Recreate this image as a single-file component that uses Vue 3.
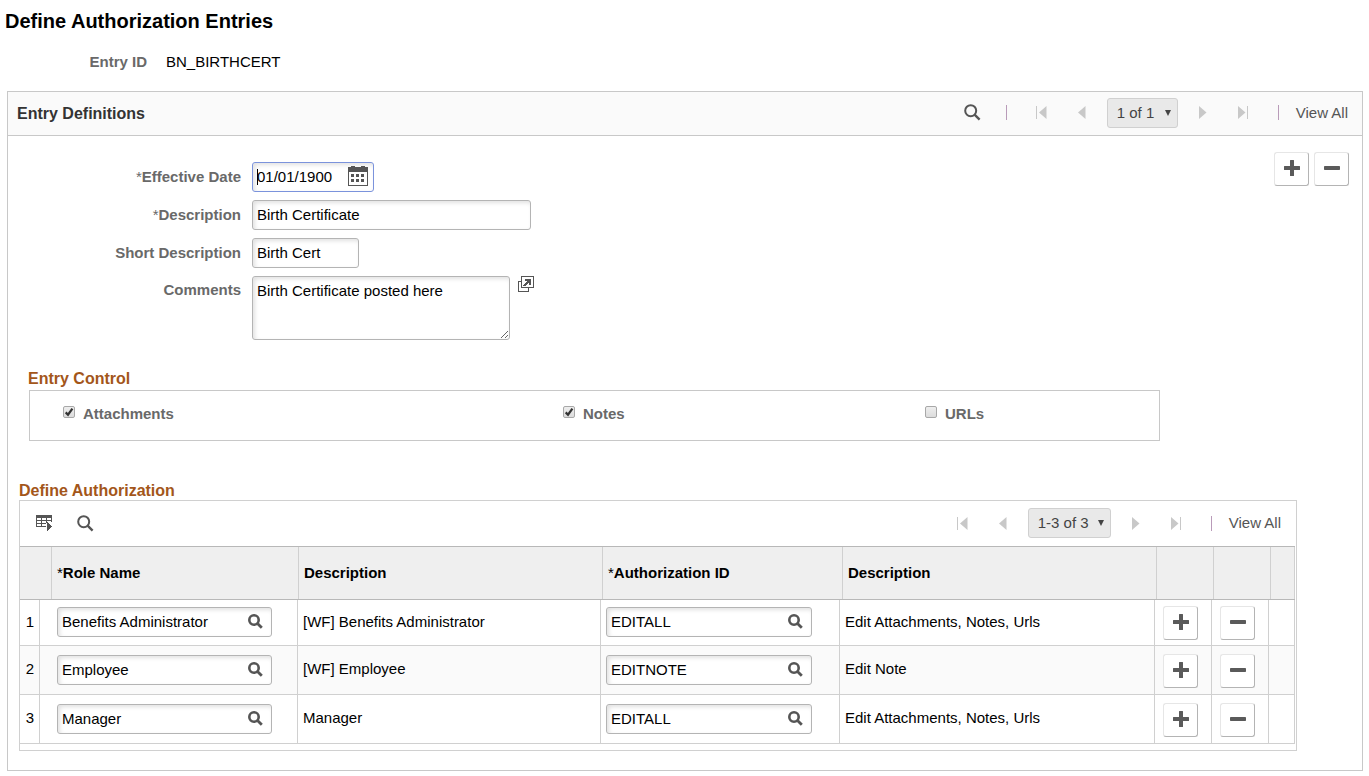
<script setup>
import { reactive, ref } from 'vue'

const entry = reactive({
  effectiveDate: '01/01/1900',
  description: 'Birth Certificate',
  shortDescription: 'Birth Cert',
  comments: 'Birth Certificate posted here',
})

const controls = reactive([
  { id: 'attachments', label: 'Attachments', checked: true },
  { id: 'notes', label: 'Notes', checked: true },
  { id: 'urls', label: 'URLs', checked: false },
])

const rows = reactive([
  { role: 'Benefits Administrator', roleText: '[WF] Benefits Administrator', auth: 'EDITALL', authText: 'Edit Attachments, Notes, Urls' },
  { role: 'Employee', roleText: '[WF] Employee', auth: 'EDITNOTE', authText: 'Edit Note' },
  { role: 'Manager', roleText: 'Manager', auth: 'EDITALL', authText: 'Edit Attachments, Notes, Urls' },
])

const entryPage = ref('1 of 1')
const rowPage = ref('1-3 of 3')
</script>

<template>
  <main class="page">
    <svg class="defs" aria-hidden="true">
      <symbol id="i-search" viewBox="0 0 17 17">
        <circle cx="6.7" cy="6.7" r="5.5" fill="none" stroke="#555" stroke-width="2" />
        <path d="M10.6 10.6 15.6 15.6" stroke="#555" stroke-width="2.4" />
      </symbol>
      <symbol id="i-lookup" viewBox="0 0 15 15">
        <circle cx="6" cy="6" r="4.7" fill="none" stroke="#555" stroke-width="2.6" />
        <path d="M9.2 9.2 13.8 13.8" stroke="#555" stroke-width="2.8" />
      </symbol>
      <symbol id="i-first" viewBox="0 0 11 13">
        <path d="M0 0h1v13H0zM10.500 0v13L3 6.500z" fill="#c8c8c8" />
      </symbol>
      <symbol id="i-prev" viewBox="0 0 8 13">
        <path d="M7.500 0v13L0 6.500z" fill="#c8c8c8" />
      </symbol>
      <symbol id="i-next" viewBox="0 0 8 13">
        <path d="M0 0v13l7.500-6.500z" fill="#c8c8c8" />
      </symbol>
      <symbol id="i-last" viewBox="0 0 11 13">
        <path d="M0 0v13l7.500-6.500zM9 0h1v13H9z" fill="#c8c8c8" />
      </symbol>
      <symbol id="i-plus" viewBox="0 0 16 16">
        <path d="M6.500 0h3q.5 0 .5.500V6h5.500q.5 0 .5.500v3q0 .5-.5.500H10v5.500q0 .5-.5.500h-3q-.5 0-.5-.5V10H.5q-.5 0-.5-.5v-3Q0 6 .5 6H6V.5q0-.5.500-.5z" fill="#5a5a5a" />
      </symbol>
      <symbol id="i-minus" viewBox="0 0 16 16">
        <rect y="6" width="16" height="4" rx=".7" fill="#5a5a5a" />
      </symbol>
    </svg>

    <h1>Define Authorization Entries</h1>
    <div class="entry-id">
      <span class="label">Entry ID</span>
      <span>BN_BIRTHCERT</span>
    </div>

    <section class="panel">
      <header class="panel-head">
        <h2>Entry Definitions</h2>
        <button class="icon find" aria-label="Find"><svg width="17" height="17"><use href="#i-search" /></svg></button>
        <nav class="pager" aria-label="Entry definitions">
          <span class="sep"></span>
          <button class="icon first" aria-label="First"><svg width="11" height="13"><use href="#i-first" /></svg></button>
          <button class="icon prev" aria-label="Previous"><svg width="8" height="13"><use href="#i-prev" /></svg></button>
          <span class="pick">
            <select v-model="entryPage" aria-label="Entry definition row"><option>1 of 1</option></select>
            <svg width="6" height="6" viewBox="0 0 6 6"><path d="M0 0h6L3 6z" fill="#444" /></svg>
          </span>
          <button class="icon next" aria-label="Next"><svg width="8" height="13"><use href="#i-next" /></svg></button>
          <button class="icon last" aria-label="Last"><svg width="11" height="13"><use href="#i-last" /></svg></button>
          <span class="sep"></span>
          <a href="#" class="all">View All</a>
        </nav>
      </header>

      <div class="top">
        <div class="fields">
          <label class="label" for="effdt"><span class="star">*</span>Effective Date</label>
          <div class="box date">
            <input id="effdt" v-model="entry.effectiveDate" type="text" />
            <span class="caret"></span>
            <button class="icon" aria-label="Choose a date">
              <svg width="20" height="20" viewBox="0 0 20 20" shape-rendering="crispEdges">
                <path d="M0 1h3V0h4v1h6V0h4v1h3v19H0zM1 6v13h18V6z" fill="#555" fill-rule="evenodd" />
                <path d="M3 8h3v3H3zM8 8h3v3H8zM13 8h3v3h-3zM3 13h3v3H3zM8 13h3v3H8zM13 13h3v3h-3z" fill="#555" />
              </svg>
            </button>
          </div>

          <label class="label" for="descr"><span class="star">*</span>Description</label>
          <div class="box long"><input id="descr" v-model="entry.description" type="text" /></div>

          <label class="label" for="short">Short Description</label>
          <div class="box short"><input id="short" v-model="entry.shortDescription" type="text" /></div>

          <label class="label upper" for="comments">Comments</label>
          <div class="comments">
            <textarea id="comments" v-model="entry.comments"></textarea>
            <button class="icon" aria-label="Expand comments">
              <svg width="16" height="16" viewBox="0 0 16 16" shape-rendering="crispEdges">
                <path d="M.5 5.500h10v10H.5z" fill="none" stroke="#555" />
                <path d="M3.500.5h12v11h-12z" fill="#fff" stroke="#555" />
                <path d="M7 3h6v6h-2V7h-1v1H9v1H8v1H5V9h1V8h1V7h1V6h1V5H7z" fill="#555" />
              </svg>
            </button>
          </div>
        </div>
        <div class="actions">
          <button class="act" aria-label="Add entry"><svg width="16" height="16"><use href="#i-plus" /></svg></button>
          <button class="act" aria-label="Delete entry"><svg width="16" height="16"><use href="#i-minus" /></svg></button>
        </div>
      </div>

      <section class="control">
        <h3>Entry Control</h3>
        <div class="checks">
          <label v-for="c in controls" :key="c.id" class="label check" :for="c.id">
            <span class="tick">
              <input :id="c.id" v-model="c.checked" type="checkbox" />
              <svg v-if="c.checked" width="12" height="12" viewBox="0 0 12 12">
                <path d="M2.700 6.400 5 8.700 9.400 2.600" fill="none" stroke="#333" stroke-width="2.200" />
              </svg>
            </span>
            {{ c.label }}
          </label>
        </div>
      </section>

      <section class="auth">
        <h3>Define Authorization</h3>
        <div class="grid">
          <div class="tools">
            <button class="icon" aria-label="Grid actions">
              <svg width="17" height="17" viewBox="0 0 17 17" shape-rendering="crispEdges">
                <path d="M0 0h16v7h-1V6h-4v2h-1V6H6v2h4v1H6v2h4v1H0zM1 3v2h4V3zM6 3v2h4V3zM11 3v2h4V3zM1 6v2h4V6zM1 9v2h4V9z" fill="#555" fill-rule="evenodd" />
                <path d="M11 7h1v1h1v1h1v1h1v1h1v1h-1v1h-1v1h-1v1h-1v1h-1z" fill="#555" />
              </svg>
            </button>
            <button class="icon" aria-label="Find in grid"><svg width="17" height="17"><use href="#i-search" /></svg></button>
            <nav class="pager" aria-label="Authorization rows">
              <button class="icon first" aria-label="First"><svg width="11" height="13"><use href="#i-first" /></svg></button>
              <button class="icon prev" aria-label="Previous"><svg width="8" height="13"><use href="#i-prev" /></svg></button>
              <span class="pick wide">
                <select v-model="rowPage" aria-label="Rows shown"><option>1-3 of 3</option></select>
                <svg width="6" height="6" viewBox="0 0 6 6"><path d="M0 0h6L3 6z" fill="#444" /></svg>
              </span>
              <button class="icon next" aria-label="Next"><svg width="8" height="13"><use href="#i-next" /></svg></button>
              <button class="icon last" aria-label="Last"><svg width="11" height="13"><use href="#i-last" /></svg></button>
              <span class="sep"></span>
              <a href="#" class="all">View All</a>
            </nav>
          </div>

          <table>
            <thead>
              <tr>
                <th></th>
                <th><span class="star">*</span>Role Name</th>
                <th>Description</th>
                <th><span class="star">*</span>Authorization ID</th>
                <th>Description</th>
                <th></th>
                <th></th>
                <th></th>
              </tr>
            </thead>
            <tbody>
              <tr v-for="(r, i) in rows" :key="i">
                <td class="num">{{ i + 1 }}</td>
                <td class="role">
                  <div class="box">
                    <input v-model="r.role" type="text" :aria-label="`Role name ${i + 1}`" />
                    <button class="icon" aria-label="Look up role"><svg width="15" height="15"><use href="#i-lookup" /></svg></button>
                  </div>
                </td>
                <td class="text">{{ r.roleText }}</td>
                <td class="authid">
                  <div class="box">
                    <input v-model="r.auth" type="text" :aria-label="`Authorization ID ${i + 1}`" />
                    <button class="icon" aria-label="Look up authorization"><svg width="15" height="15"><use href="#i-lookup" /></svg></button>
                  </div>
                </td>
                <td class="text">{{ r.authText }}</td>
                <td class="cmd"><button class="act" aria-label="Add row"><svg width="16" height="16"><use href="#i-plus" /></svg></button></td>
                <td class="cmd"><button class="act" aria-label="Delete row"><svg width="16" height="16"><use href="#i-minus" /></svg></button></td>
                <td></td>
              </tr>
            </tbody>
          </table>
        </div>
      </section>
    </section>
  </main>
</template>

<style>
body {
  margin: 0;
  background: #fff;
}
</style>

<style scoped>
* {
  box-sizing: border-box;
}
.page {
  padding: 9px 6px 5px 7px;
  font: 15px/20px "Liberation Sans", Arial, sans-serif;
  color: #000;
}
.defs {
  position: absolute;
  width: 0;
  height: 0;
}
h1, h2, h3 {
  margin: 0;
}
h1 {
  margin-left: -2px;
  font-size: 20px;
  line-height: 24px;
}
h2 {
  padding-top: 2px;
  font-size: 16px;
  color: #333;
}
h3 {
  font-size: 16px;
  color: #a3561a;
}
svg {
  display: block;
}
.label {
  font-weight: bold;
  color: #696969;
}
.star {
  font-weight: normal;
}
.entry-id {
  display: grid;
  grid-template-columns: 140px 1fr;
  gap: 19px;
  margin: 19px 0;
}
.entry-id .label {
  text-align: right;
}
.panel {
  border: 1px solid #c8c8c8;
  padding-bottom: 19px;
}
.panel-head {
  display: flex;
  align-items: center;
  height: 44px;
  padding: 0 14px 2px 9px;
  background: #fafafa;
  border-bottom: 1px solid #c8c8c8;
}
.icon {
  flex: none;
  padding: 0;
  border: 0;
  background: none;
}
.find {
  margin: 0 25px 0 auto;
}
.pager {
  display: flex;
  align-items: center;
}
.sep {
  width: 1px;
  height: 15px;
  background: #b99bb9;
}
.first {
  margin: 0 31px 0 29px;
}
.prev {
  margin-right: 21px;
}
.next {
  margin: 0 31px 0 21px;
}
.last {
  margin-right: 29px;
}
.all {
  margin-left: 17px;
  color: #555;
  text-decoration: none;
}
.pick {
  position: relative;
  width: 71px;
  height: 30px;
}
.pick.wide {
  width: 83px;
}
.pick select {
  appearance: none;
  width: 100%;
  height: 100%;
  margin: 0;
  padding: 0 0 0 9px;
  border: 1px solid #d0d0d0;
  border-radius: 3px;
  background: #e9e9e9;
  font: inherit;
  color: #444;
}
.pick svg {
  position: absolute;
  right: 7px;
  top: 12px;
  pointer-events: none;
}
.top {
  display: flex;
  justify-content: space-between;
  align-items: flex-start;
  padding: 16px 13px 0 0;
}
.actions {
  display: flex;
  gap: 5px;
}
.act {
  display: flex;
  justify-content: center;
  width: 35px;
  height: 34px;
  padding: 7px 0 0;
  border: 1px solid #e6e6e6;
  border-right-color: #b4b4b4;
  border-bottom-color: #b4b4b4;
  border-radius: 3px;
  background: #fff;
}
.fields {
  display: grid;
  grid-template-columns: 233px auto;
  gap: 8px 11px;
  align-items: center;
  margin-top: 10px;
}
.fields .label {
  text-align: right;
}
.fields .upper {
  align-self: start;
  padding-top: 4px;
}
.box {
  position: relative;
  display: flex;
  align-items: center;
  min-width: 0;
  height: 30px;
  padding: 0 8px 2px 4px;
  border: 1px solid #b4b4b4;
  border-radius: 3px;
  background: #fff;
  box-shadow: inset 2px 2px 4px rgba(0, 0, 0, 0.12);
}
.box input {
  flex: 1;
  min-width: 0;
  height: 26px;
  padding: 0;
  border: 0;
  outline: 0;
  background: none;
  font: inherit;
  color: #000;
}
.date {
  width: 122px;
  padding-right: 5px;
  border-color: #7b93dc;
}
.caret {
  position: absolute;
  left: 4px;
  top: 6px;
  width: 1px;
  height: 16px;
  background: #000;
}
.long {
  width: 279px;
}
.short {
  width: 107px;
}
.comments {
  display: flex;
  align-items: flex-start;
  gap: 8px;
}
textarea {
  width: 258px;
  height: 64px;
  padding: 4px;
  border: 1px solid #b4b4b4;
  border-radius: 3px;
  outline: 0;
  box-shadow: inset 2px 2px 4px rgba(0, 0, 0, 0.12);
  font: inherit;
  color: #000;
}
.control {
  margin: 29px 202px 0 20px;
}
.checks {
  display: grid;
  grid-template-columns: 500fr 362fr 234fr;
  height: 51px;
  margin: 1px 0 0 1px;
  padding: 13px 0 0 33px;
  border: 1px solid #c8c8c8;
}
.check {
  display: flex;
  gap: 8px;
}
.tick {
  position: relative;
  width: 12px;
  height: 12px;
  margin-top: 2px;
}
.tick input {
  appearance: none;
  display: block;
  width: 12px;
  height: 12px;
  margin: 0;
  border: 1px solid #a8a8a8;
  border-radius: 2px;
  background: linear-gradient(#eee, #dcdcdc);
}
.tick svg {
  position: absolute;
  left: 0;
  top: 0;
  pointer-events: none;
}
.auth {
  margin: 40px 65px 0 11px;
}
.grid {
  margin-top: -1px;
  padding: 0 1px 6px 0;
  border: 1px solid #d0d0d0;
}
.tools {
  display: flex;
  align-items: center;
  gap: 24px;
  height: 45px;
  padding: 0 14px 1px 16px;
}
.tools .pager {
  margin-left: auto;
}
table, thead, tbody {
  display: block;
}
tr {
  display: grid;
}
thead tr {
  grid-template-columns: 32px 247px 304px 240px 1fr 57px 57px 24px;
  height: 54px;
  border-top: 1px solid #b8b8b8;
  border-bottom: 1px solid #b8b8b8;
  background: #efefef;
}
tbody tr {
  grid-template-columns: 20px 258px 303px 239px 1fr 57px 57px 26px;
  height: 49px;
  border-bottom: 1px solid #d0d0d0;
}
tbody tr:first-child {
  height: 46px;
}
tbody tr:nth-child(even) {
  background: #fafafa;
}
th, td {
  display: flex;
  align-items: center;
  padding: 0 5px;
  border-right: 1px solid #d0d0d0;
  text-align: left;
}
td {
  padding-bottom: 2px;
}
td.num {
  padding: 0 0 2px 1px;
  justify-content: center;
}
td.role {
  padding: 9px 25px 0 17px;
  align-items: flex-start;
}
td.authid {
  padding: 9px 27px 0 5px;
  align-items: flex-start;
}
td .box {
  flex: 1;
}
td.cmd {
  padding: 8px 0 0 8px;
  align-items: flex-start;
}
tr:first-child td.role,
tr:first-child td.authid {
  padding-top: 7px;
}
tr:first-child td.cmd {
  padding-top: 6px;
}
</style>
